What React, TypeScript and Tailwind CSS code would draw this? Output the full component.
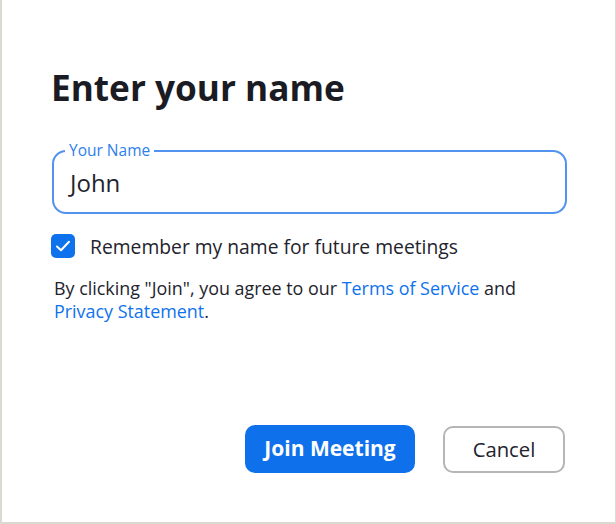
import React from "react";

export default function App() {
  const font = { fontFamily: '"Open Sans", "Noto Sans", Arial, sans-serif' };
  return (
    <div
      className="w-[616px] h-[524px] bg-white border-l-2 border-b-2 border-r border-[#dcd9d0] box-border flex flex-col"
      style={font}
    >
      <div className="pl-[50px] pr-[48px] pt-[63px] flex flex-col flex-1">
        <h1 className="text-[35.2px] leading-[48px] font-bold text-[#1b1b24] ml-[-1px]">
          Enter your name
        </h1>
        <div className="relative mt-[39px] h-[64px] border-2 border-[#5293f0] rounded-[14px] flex items-center px-[16px] pt-[2px]">
          <span className="absolute left-[11px] top-[-12px] bg-white px-[4px] text-[15.5px] leading-[20px] text-[#2e7fec]">
            Your Name
          </span>
          <span className="text-[24px] leading-[32px] text-[#23232d]">John</span>
        </div>
        <div className="flex items-center mt-[20px] h-[24px]">
          <div className="w-[24px] h-[24px] rounded-[5px] bg-[#0e72ed] flex items-center justify-center ml-[-1px]">
            <svg width="24" height="24" viewBox="0 0 24 24" fill="none">
              <path d="M6 12.5 L10 16.2 L18 7.8" stroke="white" strokeWidth="2" strokeLinecap="round" strokeLinejoin="round" />
            </svg>
          </div>
          <span className="ml-[15px] text-[19.3px] leading-[26px] text-[#23232d] mt-[2px]">
            Remember my name for future meetings
          </span>
        </div>
        <p className="mt-[19px] ml-[2px] text-[17.9px] leading-[23px] text-[#23232d]">
          By clicking "Join", you agree to our{" "}
          <span className="text-[#0e72ed]">Terms of Service</span> and
          <br />
          <span className="text-[#0e72ed]">Privacy Statement</span>.
        </p>
        <div className="flex-1" />
        <div className="flex justify-end items-start gap-[28px] mb-[49px] mr-[2px]">
          <button className="w-[170px] h-[48px] rounded-[10px] bg-[#0e71eb] text-white text-[21px] font-bold">
            Join Meeting
          </button>
          <button className="w-[122px] h-[47px] mt-[1px] rounded-[10px] border-2 border-[#b5b5b8] bg-white text-[#23232d] text-[20.3px]">
            Cancel
          </button>
        </div>
      </div>
    </div>
  );
}
